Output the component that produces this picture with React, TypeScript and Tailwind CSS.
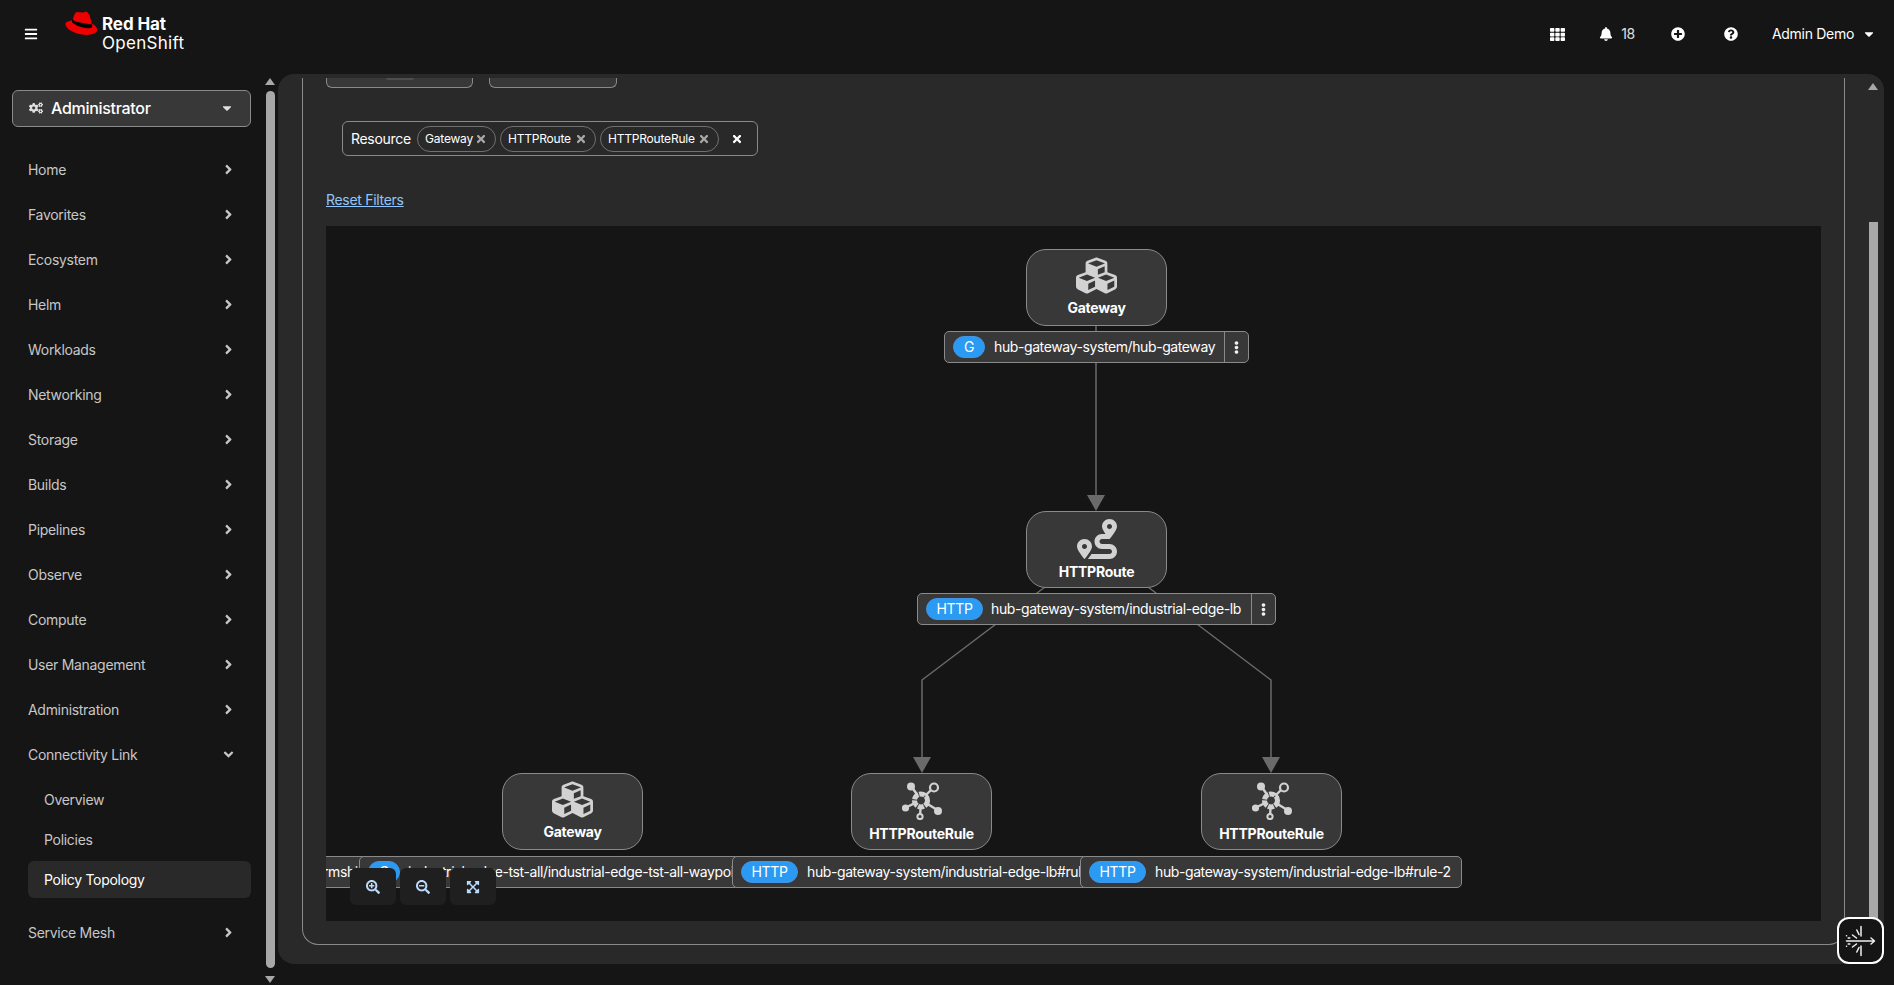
import {
  FaBars,
  FaBell,
  FaCaretDown,
  FaAngleDown,
  FaAngleRight,
  FaCogs,
  FaCubes,
  FaEllipsisV,
  FaExpandArrowsAlt,
  FaPlusCircle,
  FaQuestionCircle,
  FaRoute,
  FaSearchMinus,
  FaSearchPlus,
  FaTh,
  FaTimes,
} from "react-icons/fa";

const navTop = ["Home", "Favorites", "Ecosystem", "Helm", "Workloads", "Networking", "Storage", "Builds", "Pipelines", "Observe", "Compute", "User Management", "Administration"];

function HatLogo() {
  return (
    <svg width="33" height="25" viewBox="0 0 33 25" className="-mt-[4px] self-start" aria-hidden="true">
      <path d="M7.5 10C8.2 6 9.4 2.6 11 1.5 13 .2 15 1.6 17 1.6c2 0 3.4-1.2 5-.6 2 .7 3.2 4.6 5 12.5z" fill="#ee0000" />
      <path d="M7.2 9.4C3.2 10 .4 11.2.4 13c0 4.4 9 10.9 21 10.9 6.200 0 10.800-2.100 10.800-5.100 0-2.600-2.400-5-5.400-6.300.5 1.700 0 3-2.300 3-5.400 0-13.300-2.500-17.300-6.100z" fill="#ee0000" />
      <path d="M7.400 8.200C11 11.500 18.500 14.200 24 14.200c2.400 0 2.900-1.200 2.500-3l.7 2.700c.4 2-.4 3.300-3 3.300C17.800 17.200 10.400 14.600 7 11.200z" fill="#000" />
    </svg>
  );
}

function RuleIcon() {
  return (
    <svg width="40" height="38" viewBox="0 0 40 38" fill="#d2d2d2" stroke="#d2d2d2" aria-hidden="true">
      <path d="M9 4 19 18M32 5 19 18M3 26 19 18M18 35 19 18M37 29 19 18" strokeWidth="2.4" />
      <circle cx="19" cy="18.500" r="6.500" fill="#383838" strokeWidth="5" strokeDasharray="6 1" />
      <circle cx="9" cy="4.500" r="4" strokeWidth="0" />
      <circle cx="32" cy="5.500" r="4" fill="#383838" strokeWidth="2.200" />
      <circle cx="3.500" cy="26" r="3.600" strokeWidth="0" />
      <circle cx="18" cy="34.500" r="2.600" fill="#383838" strokeWidth="2" />
      <circle cx="36" cy="29" r="4" strokeWidth="0" />
    </svg>
  );
}

function SpeedIcon() {
  return (
    <svg width="32" height="32" viewBox="0 0 32 32" fill="none" stroke="#f0f0f0" strokeWidth="1.500" strokeLinecap="round" strokeLinejoin="round" aria-hidden="true">
      <path d="M1.500 16H29.500M26 13l3.500 3-3.500 3" />
      <path d="M16 1.500V11M16 21v9.500M11.800 5 14 9.500M11.800 27 14 22.500M7.500 10l4 3M7.500 22l4-3" />
      <path d="M1.500 10.800h.1M1.500 21.200h.1M3.200 13h1.600M3.200 19h1.600" />
    </svg>
  );
}

function ScrollArrow({ down = false, className = "" }: { down?: boolean; className?: string }) {
  return (
    <svg width="10" height="7" viewBox="0 0 10 7" className={className} aria-hidden="true">
      <path d={down ? "M0 0h10L5 7z" : "M0 7h10L5 0z"} fill="#a8a8a8" />
    </svg>
  );
}

function NavItem({ label }: { label: string }) {
  return (
    <a className="flex h-[45px] items-center justify-between pl-7 pr-[28px] text-sm text-[#c7c7c7]">
      {label}
      <FaAngleRight className="text-[15px] text-[#c7c7c7]" />
    </a>
  );
}

function Sidebar() {
  return (
    <aside className="flex w-[264px] shrink-0 flex-col">
      <button className="ml-3 mt-4 flex h-[37px] w-[239px] items-center rounded-md border border-[#8a8a8a] bg-[#383838] pb-[1px] pl-4 pr-[16px] text-base font-medium text-white">
        <FaCogs className="mr-2 text-[14px] text-[#e0e0e0]" />
        Administrator
        <FaCaretDown className="ml-auto text-[14px] text-[#e0e0e0]" />
      </button>
      <nav className="mt-[20px] flex flex-col">
        {navTop.map((l) => (
          <NavItem key={l} label={l} />
        ))}
        <a className="flex h-[45px] items-center justify-between pl-7 pr-[28px] text-sm text-[#c7c7c7]">
          Connectivity Link
          <FaAngleDown className="text-[15px]" />
        </a>
        <a className="mt-[5px] flex h-[35px] items-center pl-11 text-sm text-[#c7c7c7]">Overview</a>
        <a className="mt-[5px] flex h-[35px] items-center pl-11 text-sm text-[#c7c7c7]">Policies</a>
        <a className="ml-7 mr-[13px] mt-[4px] flex h-[37px] items-center rounded-md bg-[#292929] pl-4 text-sm text-white">Policy Topology</a>
        <div className="mt-[12px]">
          <NavItem label="Service Mesh" />
        </div>
      </nav>
    </aside>
  );
}

function SideScroll() {
  return (
    <div className="flex w-[14px] shrink-0 flex-col items-center pr-[2px]">
      <ScrollArrow className="mt-[4px]" />
      <div className="mt-[6px] h-[877px] w-[9px] rounded-full bg-[#a8a8a8]" />
      <ScrollArrow down className="mt-[8px]" />
    </div>
  );
}

type NodeDef = { label: string; pos: string; icon: "gateway" | "route" | "rule" };
const nodes: NodeDef[] = [
  { label: "Gateway", pos: "left-[700px] top-[23px]", icon: "gateway" },
  { label: "HTTPRoute", pos: "left-[700px] top-[285px]", icon: "route" },
  { label: "Gateway", pos: "left-[176px] top-[547px]", icon: "gateway" },
  { label: "HTTPRouteRule", pos: "left-[525px] top-[547px]", icon: "rule" },
  { label: "HTTPRouteRule", pos: "left-[875px] top-[547px]", icon: "rule" },
];

type TagDef = { badge?: string; badgeW?: string; text: string; pos: string; menu?: boolean; gap: string };
const tags: TagDef[] = [
  { badge: "G", badgeW: "w-[32px]", text: "hub-gateway-system/hub-gateway", pos: "left-[618px] top-[105px] w-[305px]", menu: true, gap: "ml-[9px]" },
  { badge: "HTTP", badgeW: "w-[57px]", text: "hub-gateway-system/industrial-edge-lb", pos: "left-[591px] top-[367px] w-[359px]", menu: true, gap: "ml-[8px]" },
  { text: "rmshift-gateway", pos: "-left-[12px] top-[630px] w-[240px]", gap: "ml-[0px]" },
  { badge: "G", badgeW: "w-[32px]", text: "industrial-edge-tst-all/industrial-edge-tst-all-waypoint", pos: "left-[33px] top-[630px] w-[425px]", gap: "ml-[8px]" },
  { badge: "HTTP", badgeW: "w-[57px]", text: "hub-gateway-system/industrial-edge-lb#rule-1", pos: "left-[406px] top-[630px] w-[381px]", gap: "ml-[9px]" },
  { badge: "HTTP", badgeW: "w-[57px]", text: "hub-gateway-system/industrial-edge-lb#rule-2", pos: "left-[754px] top-[630px] w-[382px]", gap: "ml-[9px]" },
];

function TopoNode({ n }: { n: NodeDef }) {
  return (
    <div className={`absolute flex h-[77px] w-[141px] flex-col items-center rounded-[20px] border border-[#8a8a8a] bg-[#383838] ${n.pos}`}>
      <div className={`flex h-[46px] items-center justify-center ${n.icon === "gateway" ? "mt-[2px]" : "mt-[4px]"}`}>
        {n.icon === "gateway" && <FaCubes className="text-[41px] text-[#d2d2d2]" />}
        {n.icon === "route" && <FaRoute className="text-[40px] text-[#d2d2d2]" />}
        {n.icon === "rule" && <RuleIcon />}
      </div>
      <span className="text-sm leading-5 font-bold tracking-[-0.25px] text-white">{n.label}</span>
    </div>
  );
}

function TopoTag({ t }: { t: TagDef }) {
  return (
    <div className={`absolute flex h-[32px] items-center overflow-hidden rounded-[5px] border border-[#8a8a8a] bg-[#383838] pl-[8px] ${t.pos}`}>
      {t.badge && (
        <span className={`flex h-[22px] shrink-0 items-center justify-center rounded-full border border-[#4394e5] bg-[#2b9af3] text-sm text-white ${t.badgeW}`}>{t.badge}</span>
      )}
      <span className={`${t.gap} whitespace-nowrap text-sm tracking-[-0.4px] text-white`}>{t.text}</span>
      {t.menu && (
        <span className="ml-auto flex h-full w-[24px] shrink-0 items-center justify-center border-l border-[#8a8a8a]">
          <FaEllipsisV className="text-[13px] text-[#f0f0f0]" />
        </span>
      )}
    </div>
  );
}

function Canvas() {
  const edge = "#6a6a6a";
  return (
    <div className="relative h-[695px] w-[1495px] overflow-hidden bg-[#151515]">
      <svg className="absolute inset-0" width="1495" height="695" fill="none" aria-hidden="true">
        <path d="M770 99V270" stroke={edge} strokeWidth="1.500" />
        <path d="M761 269h18l-9 16z" fill={edge} />
        <path d="M719 361 596 454V532" stroke={edge} strokeWidth="1.500" />
        <path d="M822 361 945 454V532" stroke={edge} strokeWidth="1.500" />
        <path d="M587 531h18l-9 16z" fill={edge} />
        <path d="M936 531h18l-9 16z" fill={edge} />
      </svg>
      {nodes.map((n) => (
        <TopoNode key={n.pos} n={n} />
      ))}
      {tags.map((t) => (
        <TopoTag key={t.pos} t={t} />
      ))}
      <div className="absolute left-[24px] top-[642px] flex gap-[4px]">
        {[FaSearchPlus, FaSearchMinus, FaExpandArrowsAlt].map((Icon, i) => (
          <button key={i} className="flex h-[37px] w-[46px] items-center justify-center rounded-md bg-[#1f1f1f] text-[#b9dafc]">
            <Icon className="text-sm" />
          </button>
        ))}
      </div>
    </div>
  );
}

function Chip({ label, className }: { label: string; className: string }) {
  return (
    <span className={`flex h-[26px] items-center justify-between rounded-full border border-[#707070] pl-[7px] pr-[8px] text-xs tracking-[-0.2px] text-white ${className}`}>
      {label}
      <FaTimes className="text-[12px] text-[#a8a8a8]" />
    </span>
  );
}

export default function App() {
  return (
    <div className="flex h-screen flex-col overflow-hidden bg-[#151515] tracking-[-0.3px] [font-family:Inter,sans-serif]">
      <header className="flex h-[74px] shrink-0 items-center pb-[6px] text-white">
        <FaBars className="ml-[24px] text-[14px]" />
        <div className="ml-[27px] flex items-center gap-[4px]">
          <HatLogo />
          <div className="flex flex-col leading-[19px]">
            <span className="text-[17px] font-bold tracking-[-0.1px]">Red Hat</span>
            <span className="text-[17px] tracking-[0.3px]">OpenShift</span>
          </div>
        </div>
        <div className="ml-auto flex items-center pr-[18px]">
          <FaTh className="text-[15px]" />
          <FaBell className="ml-[34px] text-[14px]" />
          <span className="ml-[8px] text-sm text-[#e0e0e0]">18</span>
          <FaPlusCircle className="ml-[36px] text-[14px]" />
          <FaQuestionCircle className="ml-[39px] text-[14px]" />
          <span className="ml-[34px] text-sm">Admin Demo</span>
          <FaCaretDown className="ml-[8px] text-[14px]" />
        </div>
      </header>
      <div className="flex min-h-0 flex-1">
        <Sidebar />
        <SideScroll />
        <main className="flex h-[890px] w-[1606px] overflow-hidden rounded-[16px] bg-[#292929]">
          <div className="flex min-w-0 flex-1 flex-col pl-6 pt-1">
            <section className="flex h-[867px] flex-col rounded-b-[16px] border-x border-b border-[#8a8a8a] pl-[23px] pr-[24px]">
              <div className="flex gap-4">
                <div className="flex h-[10px] w-[147px] justify-center rounded-b-md border-x border-b border-[#8a8a8a] bg-[#383838]">
                  <div className="h-[2px] w-[28px] rounded-b-full bg-[#4d4d4d]" />
                </div>
                <div className="h-[10px] w-[128px] rounded-b-md border-x border-b border-[#8a8a8a] bg-[#383838]" />
              </div>
              <div className="ml-4 mt-[33px] flex h-[35px] w-[416px] items-center rounded-md border border-[#8a8a8a] pl-[8px]">
                <span className="w-[66px] shrink-0 text-sm text-white">Resource</span>
                <Chip label="Gateway" className="w-[79px]" />
                <Chip label="HTTPRoute" className="ml-[4px] w-[96px]" />
                <Chip label="HTTPRouteRule" className="ml-[4px] w-[119px]" />
                <FaTimes className="ml-[12px] text-[12px] text-white" />
              </div>
              <a className="mt-[34px] h-[36px] text-sm leading-5 text-[#92c5f9] underline">Reset Filters</a>
              <Canvas />
            </section>
          </div>
          <div className="flex w-[39px] shrink-0 flex-col items-center pl-[17px]">
            <ScrollArrow className="mt-[9px]" />
            <div className="mt-[132px] h-[742px] w-[9px] bg-[#a8a8a8]" />
          </div>
        </main>
      </div>
      <button className="absolute left-[1837px] top-[917px] flex h-[47px] w-[47px] items-center justify-center rounded-[12px] border-2 border-white bg-[#151515]">
        <SpeedIcon />
      </button>
    </div>
  );
}
